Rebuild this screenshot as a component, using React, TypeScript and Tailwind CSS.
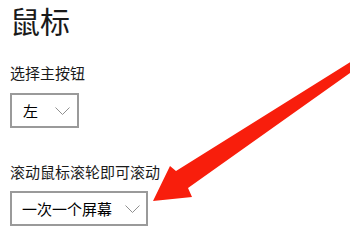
import React from "react";

const Chevron = () => (
  <svg width="15" height="8" viewBox="0 0 15 8" className="shrink-0">
    <path d="M0.5 0.5 L7.5 7.5 L14.5 0.5" fill="none" stroke="#8f8f8f" strokeWidth="1" />
  </svg>
);

export default function App() {
  return (
    <div
      className="relative w-[350px] h-[230px] overflow-hidden bg-white text-[#1a1a1a]"
      style={{ fontFamily: '"Noto Sans CJK SC", "Noto Sans", sans-serif' }}
    >
      <div className="flex flex-col items-start pl-[10px]">
        <div className="text-[30px] leading-[40px]">鼠标</div>
        <div className="mt-[25px] text-[15px] leading-[15px]">选择主按钮</div>
        <div className="mt-[13px] w-[69px] h-[35px] border-2 border-[#9a9a9a] flex items-center justify-between pl-[11px] pr-[7px] text-[15px] text-black">
          <span className="leading-[15px]">左</span>
          <Chevron />
        </div>
        <div className="mt-[36px] text-[15px] leading-[15px]">滚动鼠标滚轮即可滚动</div>
        <div className="mt-[12px] w-[138px] h-[35px] border-2 border-[#9a9a9a] flex items-center justify-between pl-[10px] pr-[6px] text-[15px] text-black">
          <span className="leading-[15px]">一次一个屏幕</span>
          <Chevron />
        </div>
      </div>
      <svg
        className="absolute left-0 top-0 pointer-events-none"
        width="350"
        height="230"
        viewBox="0 0 350 230"
      >
        <polygon
          points="153,201 170,166 176,171 360,56 360,66 188,188 192,197"
          fill="#f81e0c"
        />
      </svg>
    </div>
  );
}
